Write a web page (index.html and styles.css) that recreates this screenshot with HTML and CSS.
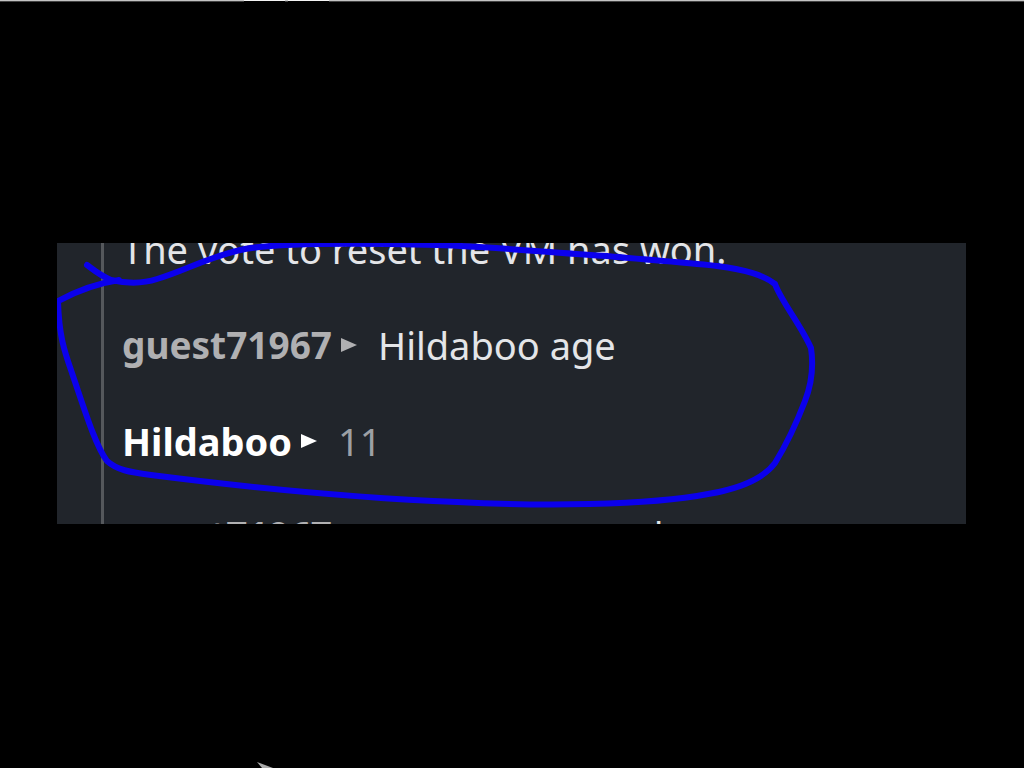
FILE: index.html
```html
<!DOCTYPE html>
<html lang="en">
<head>
  <meta charset="UTF-8">
  <meta name="viewport" content="width=device-width, initial-scale=1.0">
  <title>Chat</title>
  <link rel="stylesheet" href="styles.css">
</head>
<body>

<div class="top-line">
  <span class="tab"></span>
  <span class="tab"></span>
</div>

<main class="stage">
  <div class="chat">
    <div class="messages">
      <p class="message">The vote to reset the VM has won.</p>
      <p class="message"><b class="name guest">guest71967</b><svg class="arrow guest" viewBox="0 0 18 18"><path d="M1 2 L17 9 L1 16 Z"/></svg><span>Hildaboo age</span></p>
      <p class="message"><b class="name">Hildaboo</b><svg class="arrow" viewBox="0 0 18 18"><path d="M1 2 L17 9 L1 16 Z"/></svg><span class="faded">11</span></p>
      <p class="message last"><b class="name guest">guest71967</b><svg class="arrow guest" viewBox="0 0 18 18"><path d="M1 2 L17 9 L1 16 Z"/></svg><span class="cut">l</span></p>
    </div>
    <!-- hand-drawn circle over the messages -->
    <svg class="marker" viewBox="0 0 909 281" preserveAspectRatio="none">
      <path d="M30 22 C38 28 44 33 54 37 C72 41 88 40 100 36 C130 27 150 14 188 6 C220 0 300 0 380 2 C440 4 500 10 550 13 C590 17 640 20 660 23 C690 27 706 32 718 41 C724 58 744 82 754 105 C757 125 753 145 748 158 C738 184 726 207 718 220 C706 236 680 246 651 251 C590 263 480 263 400 259 C300 255 180 243 94 232 C72 229 60 227 50 218 C38 202 26 162 15 130 C8 110 2 94 1 58 C16 50 36 41 62 37"/>
    </svg>
  </div>
</main>

<svg class="pointer" viewBox="0 0 18 6"><path d="M1 0 L17 6 L6 6 Z"/></svg>

</body>
</html>
```
FILE: styles.css
```css
body {
  margin: 0;
  min-height: 100vh;
  display: flex;
  flex-direction: column;
  position: relative;
  overflow: hidden;
  background-color: #000;
  color: #e4e5e8;
  font-family: "Noto Sans", "Open Sans", sans-serif;
}
.top-line {
  display: flex;
  gap: 3px;
  height: 1px;
  padding-left: 244px;
  background-color: #c4c4c4;
  border-bottom: 1px solid #444;
}
.tab {
  width: 41px;
  height: 2px;
  background: linear-gradient(#f4f4f4 50%, #000 50%);
}
.stage {
  flex: 1;
  display: flex;
  align-items: center;
  padding: 0 58px 3px 57px;
}
.chat {
  position: relative;
  flex: 1;
  height: 281px;
  overflow: hidden;
  background-color: #21252b;
}
.messages {
  margin-left: 44px;
  padding-left: 18px;
  border-left: 3px solid #55585c;
}
.message {
  display: flex;
  align-items: center;
  height: 96px;
  margin: 0;
  font-size: 38px;
  line-height: 96px;
  white-space: nowrap;
}
.message:first-child {
  margin-top: -42px;
}
.message.last {
  margin-top: -2px;
}
.name {
  color: #fff;
}
.name.guest {
  font-size: 37px;
}
.arrow {
  width: 18px;
  height: 18px;
  margin: 0 20px 0 8px;
  fill: #fff;
}
.guest {
  color: #b0b0b2;
  fill: #b0b0b2;
}
.faded {
  color: #9da0a5;
}
.cut {
  margin-left: 276px;
  font-size: 36px;
}
.marker {
  position: absolute;
  top: 0;
  left: 0;
  width: 100%;
  height: 100%;
  fill: none;
  stroke: #0b00ec;
  stroke-width: 6;
  stroke-linecap: round;
  stroke-linejoin: round;
}
.pointer {
  position: absolute;
  bottom: 0;
  left: 25%;
  width: 18px;
  height: 6px;
  fill: #aaa;
}
```
